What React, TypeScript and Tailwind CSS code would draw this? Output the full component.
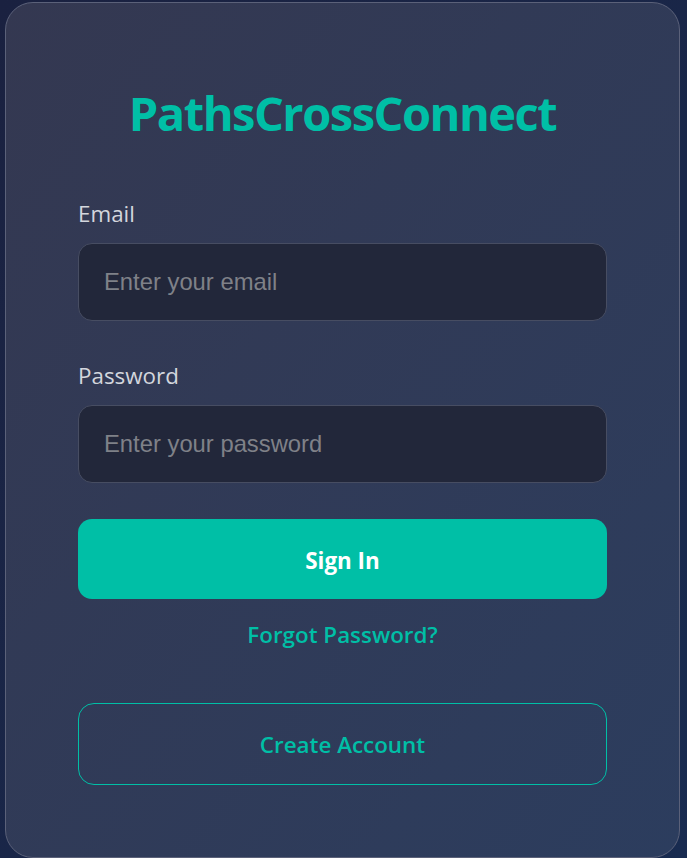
export default function App() {
  return (
    <div
      className="min-h-[858px] w-full bg-gradient-to-br from-[#1a2140] to-[#182b50] pt-[2px] pl-[5px]"
      style={{ fontFamily: '"Open Sans", "Noto Sans", sans-serif' }}
    >
      <div className="flex w-[675px] flex-col rounded-[28px] border border-[#5b6179] bg-gradient-to-br from-[#343851] to-[#2c3d5e] p-[72px]">
        <h1 className="mt-[10px] text-center text-[47px] leading-[56px] font-bold tracking-[-1.5px] text-[#00bfa6]">
          PathsCrossConnect
        </h1>

        <form className="mt-[59px] flex flex-col" onSubmit={(e) => e.preventDefault()}>
          <label className="mb-[15px] text-[22.4px] leading-[28px] text-[#d3d6dd]">Email</label>
          <input
            type="email"
            placeholder="Enter your email"
            className="h-[78px] rounded-[14px] border border-[#474d62] bg-[#22273a] px-[25px] text-[23.8px] text-[#d3d6dd] outline-none placeholder:text-[#7f8188]"
            style={{ fontFamily: '"Liberation Sans", Arial, sans-serif' }}
          />

          <label className="mt-[41px] mb-[15px] text-[22.4px] leading-[28px] text-[#d3d6dd]">Password</label>
          <input
            type="password"
            placeholder="Enter your password"
            className="h-[78px] rounded-[14px] border border-[#474d62] bg-[#22273a] px-[25px] text-[23.8px] text-[#d3d6dd] outline-none placeholder:text-[#7f8188]"
            style={{ fontFamily: '"Liberation Sans", Arial, sans-serif' }}
          />

          <button
            type="submit"
            className="mt-[36px] h-[80px] rounded-[14px] bg-[#00bfa6] pt-[3px] text-[22.4px] font-bold text-white"
          >
            Sign In
          </button>
        </form>

        <a className="mt-[22px] self-center text-[22.4px] leading-[28px] font-semibold text-[#00bfa6]" href="#">
          Forgot Password?
        </a>

        <button
          type="button"
          className="mt-[54px] h-[82px] rounded-[16px] border border-[#00bfa6] bg-transparent pt-[2px] text-[22.4px] font-semibold text-[#00bfa6]"
        >
          Create Account
        </button>
      </div>
    </div>
  );
}
